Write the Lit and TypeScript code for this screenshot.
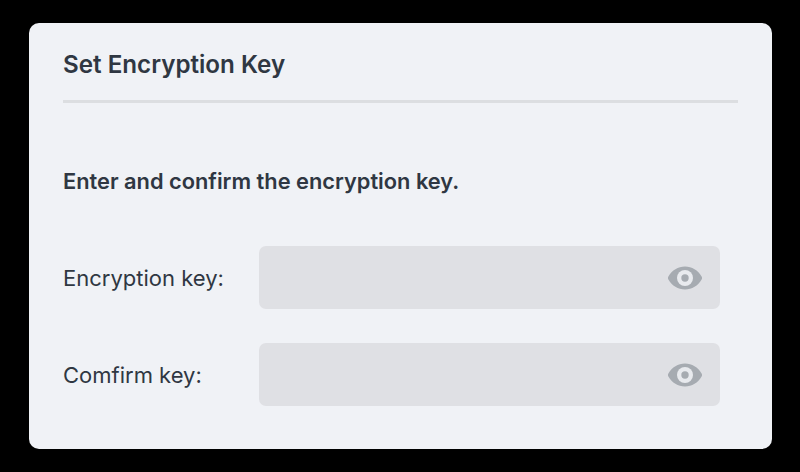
import { LitElement, html, css } from "lit";
import { customElement } from "lit/decorators.js";

const eye = html`<svg class="eye" viewBox="0 0 34 24" width="34" height="24" aria-hidden="true">
  <path fill="#a6abb1" d="M17 .6C10 .6 4 4.400.4 10.600c-.6 1-.6 1.800 0 2.800C4 19.600 10 23.400 17 23.400s13-3.800 16.600-10c.6-1 .6-1.800 0-2.800C30 4.400 24 .6 17 .6z"/>
  <circle cx="17" cy="12" r="8" fill="#e8eaee"/>
  <circle cx="17" cy="12" r="3.700" fill="#a6abb1"/>
</svg>`;

@customElement("app-root")
export class AppRoot extends LitElement {
  static styles = css`
    :host {
      display: block;
      width: 800px;
      height: 472px;
      background: #000;
      font-family: Inter, "Liberation Sans", sans-serif;
      color: #2f3742;
      box-sizing: border-box;
      padding: 23px 28px 23px 29px;
    }
    .card {
      height: 100%;
      box-sizing: border-box;
      background: #f0f2f6;
      border-radius: 10px;
      padding: 25px 34px 0 34px;
      display: flex;
      flex-direction: column;
    }
    .title {
      font-size: 24.2px;
      line-height: 34px;
      font-weight: 600;
      padding-bottom: 18px;
      border-bottom: 3px solid #dcdee1;
    }
    .lead {
      margin-top: 63px;
      font-size: 21.8px;
      line-height: 30px;
      font-weight: 600;
    }
    .rows {
      margin-top: 50px;
      display: flex;
      flex-direction: column;
      gap: 34px;
    }
    .row {
      display: flex;
      align-items: center;
    }
    .label {
      width: 196.4px;
      font-size: 22px;
      line-height: 30px;
    }
    .field {
      width: 460.6px;
      height: 63px;
      background: #dfe0e4;
      border-radius: 7px;
      display: flex;
      align-items: center;
      justify-content: flex-end;
      padding-right: 18px;
      box-sizing: border-box;
    }
    .eye { display: block; }
  `;

  render() {
    return html`<div class="card">
      <div class="title">Set Encryption Key</div>
      <div class="lead">Enter and confirm the encryption key.</div>
      <div class="rows">
        <div class="row"><span class="label">Encryption key:</span><div class="field">${eye}</div></div>
        <div class="row"><span class="label">Comfirm key:</span><div class="field">${eye}</div></div>
      </div>
    </div>`;
  }
}
